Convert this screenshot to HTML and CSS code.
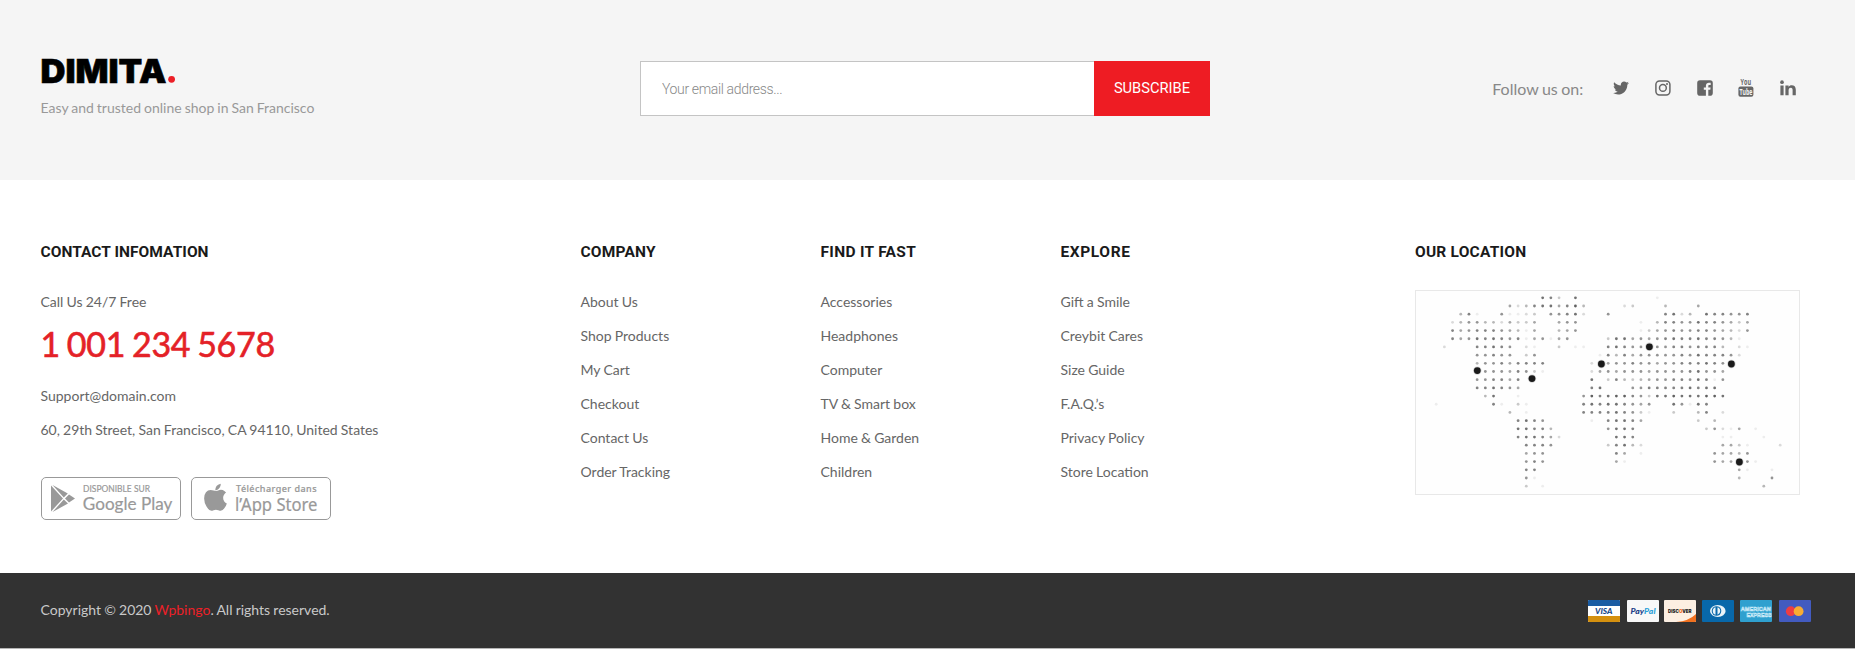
FILE: index.html
```html
<!DOCTYPE html>
<html lang="en">
<head>
<meta charset="utf-8">
<title>Dimita</title>
<link rel="stylesheet" href="styles.css">
</head>
<body>
<section class="newsletter">
  <div class="brand">
    <svg class="logo" width="136" height="42" viewBox="0 -10 136 42"><text class="logo-text" x="-0.5" y="24.5" textLength="126" lengthAdjust="spacingAndGlyphs">DIMITA</text><circle cx="130.6" cy="21.3" r="3.4" fill="#ec1f27"/></svg>
    <p class="tagline">Easy and trusted online shop in San Francisco</p>
  </div>
  <form class="subscribe">
    <input class="email" type="text" placeholder="Your email address...">
    <button class="submit" type="button">SUBSCRIBE</button>
  </form>
  <div class="follow">
    <span class="follow-label">Follow us on:</span>
    <div class="socials">
      <svg width="18" height="20" viewBox="0 -100 1792 1992"><path d="M1684 408q-67 98-162 167 1 14 1 42 0 130-38 259.500t-115.500 248.500-184.500 210.500-258 146-323 54.500q-271 0-496-145 35 4 78 4 225 0 401-138-105-2-188-64.500t-114-159.500q33 5 61 5 43 0 85-11-112-23-185.500-111.500t-73.500-205.500v-4q68 38 146 41-66-44-105-115t-39-154q0-88 44-163 121 149 294.500 238.500t371.500 99.500q-8-38-8-74 0-134 94.500-228.500t228.500-94.500q140 0 236 102 109-21 205-78-37 115-142 178 93-10 186-50z"/></svg>
      <svg width="18" height="20" viewBox="0 0 18 20"><g fill="none" stroke="#666" stroke-width="1.500"><rect x="1.900" y="2.900" width="14" height="14" rx="3.600"/><circle cx="8.900" cy="9.900" r="3.400"/></g><circle cx="13" cy="5.900" r="1"/></svg>
      <svg width="18" height="20" viewBox="0 0 18 20"><path d="M4 2.300h10a2.800 2.800 0 0 1 2.800 2.800v9.800a2.800 2.800 0 0 1-2.800 2.800h-1.700v-6h2l.3-2.300h-2.300V8c0-.7.200-1.100 1.200-1.100h1.200V4.800c-.2 0-1-.1-1.800-.1-1.800 0-3 1.100-3 3.100v1.600H7.800v2.300h2.100v6H4a2.800 2.800 0 0 1-2.800-2.800V5.100A2.800 2.800 0 0 1 4 2.300z"/></svg>
      <svg class="yt-icon" width="18" height="28" viewBox="0 -4 18 28"><text class="yt" x="3.600" y="7.300" textLength="10.400" lengthAdjust="spacingAndGlyphs">You</text><rect x="1.400" y="8.400" width="15" height="10.400" rx="2"/><text class="yt yt-in" x="2.600" y="17" textLength="12.800" lengthAdjust="spacingAndGlyphs">Tube</text></svg>
      <svg width="18" height="20" viewBox="0 0 18 20"><circle cx="3" cy="4.200" r="1.850"/><path d="M1.400 7.500h3.200v9.700H1.400zM6.400 7.500h3.200v1.400c.6-.9 1.500-1.600 3.200-1.600 2.400 0 4 1.500 4 4.400v5.500h-3.200v-5.100c0-1.400-.5-2.300-1.700-2.300-1.300 0-2.300.8-2.300 2.500v4.900H6.400z"/></svg>
    </div>
  </div>
</section>

<section class="main">
  <div class="col contact">
    <h2 class="title t-contact">CONTACT INFOMATION</h2>
    <p class="line">Call Us 24/7 Free</p>
    <p class="phone">1 001 234 5678</p>
    <p class="line">Support@domain.com</p>
    <p class="line">60, 29th Street, San Francisco, CA 94110, United States</p>
    <div class="badges">
      <svg width="140" height="43" viewBox="0 0 140 43">
        <rect class="badge-frame" x=".5" y=".5" width="139" height="42" rx="4.500"/>
        <path class="badge-fill" d="M10 8.500v26L22 21.500zM11.500 8l11.300 12.500 4-4zM28 17.400L24 21.500l4 4 6-4zM22.800 22.500L11.500 35 27 26.600z"/>
        <text class="b-top-g" x="42" y="14.500" textLength="67" lengthAdjust="spacingAndGlyphs">DISPONIBLE SUR</text>
        <text class="b-main-g" x="41.800" y="32.500" textLength="89.500" lengthAdjust="spacingAndGlyphs">Google Play</text>
      </svg>
      <svg width="140" height="43" viewBox="0 0 140 43">
        <rect class="badge-frame" x=".5" y=".5" width="139" height="42" rx="4.500"/>
        <path class="badge-fill" transform="translate(10 6.700) scale(.0163)" d="M1585 1215q-39 125-123 250-129 196-257 196-49 0-140-32-86-32-151-32-61 0-142 33-81 34-132 34-152 0-301-259-147-261-147-503 0-228 113-374 113-144 284-144 72 0 177 30 104 30 138 30 45 0 143-34 102-34 173-34 119 0 213 65 52 36 104 100-79 67-114 118-65 94-65 207 0 124 69 223t158 126zm-376-1173q0 61-29 136-30 75-93 138-54 54-108 72-37 11-104 17 3-149 78-257 74-107 250-148 3 10 5 22z"/>
        <text class="b-top-a" x="45" y="14.800" textLength="80.500">Télécharger dans</text>
        <text class="b-main-a" x="44" y="33.500" textLength="82.500" lengthAdjust="spacingAndGlyphs">l’App Store</text>
      </svg>
    </div>
  </div>
  <div class="col links">
    <h2 class="title t-company">COMPANY</h2>
    <a class="line">About Us</a><a class="line">Shop Products</a><a class="line">My Cart</a><a class="line">Checkout</a><a class="line">Contact Us</a><a class="line">Order Tracking</a>
  </div>
  <div class="col links">
    <h2 class="title t-find">FIND IT FAST</h2>
    <a class="line">Accessories</a><a class="line">Headphones</a><a class="line">Computer</a><a class="line">TV &amp; Smart box</a><a class="line">Home &amp; Garden</a><a class="line">Children</a>
  </div>
  <div class="col links">
    <h2 class="title t-explore">EXPLORE</h2>
    <a class="line">Gift a Smile</a><a class="line">Creybit Cares</a><a class="line">Size Guide</a><a class="line">F.A.Q.’s</a><a class="line">Privacy Policy</a><a class="line">Store Location</a>
  </div>
  <div class="col">
    <h2 class="title t-location">OUR LOCATION</h2>
    <svg class="map" id="map" width="385" height="205" viewBox="-1 -1 385 205"></svg>
  </div>
</section>

<footer class="bottom">
  <p class="copy">Copyright © 2020 <a class="accent">Wpbingo</a>. All rights reserved.</p>
  <div class="cards">
    <svg width="32" height="22" viewBox="0 0 32 22"><rect width="32" height="22" rx="1" fill="#fff"/><path fill="#1a5ca3" d="M1 0h30a1 1 0 0 1 1 1v5H0V1a1 1 0 0 1 1-1z"/><path fill="#d4900f" d="M0 16h32v5a1 1 0 0 1-1 1H1a1 1 0 0 1-1-1z"/><text class="visa" x="7" y="14" textLength="17.500" lengthAdjust="spacingAndGlyphs">VISA</text></svg>
    <svg class="c2" width="32" height="22" viewBox="0 0 32 22"><rect width="32" height="22" rx="1" fill="#f8f8f8"/><text class="paypal" x="3.500" y="13.700" textLength="25" lengthAdjust="spacingAndGlyphs"><tspan fill="#223f87">Pay</tspan><tspan fill="#2ba0d8">Pal</tspan></text></svg>
    <svg class="c3" width="32" height="22" viewBox="0 0 32 22"><rect width="32" height="22" rx="1" fill="#fcefe2"/><path fill="#f1711f" d="M32 14v7a1 1 0 0 1-1 1H12q13-1 20-8z"/><text class="discover" x="4" y="13" textLength="23.500" lengthAdjust="spacingAndGlyphs">DISC<tspan fill="#ee6c1b">O</tspan>VER</text></svg>
    <svg class="c4" width="32" height="22" viewBox="0 0 32 22"><rect width="32" height="22" rx="1" fill="#0868aa"/><ellipse cx="15.800" cy="11" rx="7.800" ry="6" fill="#e9f3f8"/><circle cx="14.500" cy="11" r="4.800" fill="#0868aa"/><path d="M13.500 7.200a4 4 0 0 0 0 7.600zM15.500 7.200a4 4 0 0 1 0 7.600z" fill="#e9f3f8"/></svg>
    <svg class="c5" width="32" height="22" viewBox="0 0 32 22"><rect width="32" height="22" rx="1" fill="#2fa0cf"/><text class="amex" x=".8" y="11" textLength="30" lengthAdjust="spacingAndGlyphs">AMERICAN</text><text class="amex" x="6.500" y="17.300" textLength="25" lengthAdjust="spacingAndGlyphs">EXPRESS</text></svg>
    <svg class="c6" width="32" height="22" viewBox="0 0 32 22"><rect width="32" height="22" rx="1" fill="#435bc0"/><circle cx="11.800" cy="11.200" r="4.900" fill="#ee3d43"/><circle cx="19.600" cy="11.200" r="4.900" fill="#f8ac32"/></svg>
  </div>
</footer>
<script src="map.js"></script>
</body>
</html>
```

FILE: styles.css
```css
* { box-sizing: border-box; }
body { margin: 0; height: 649px; overflow: hidden; background: #fff; font-family: Lato, sans-serif; font-size: 14px; color: #666; }
p, h2 { margin: 0; }

.newsletter { height: 180px; padding: 0 41px 0 40.5px; background: #f5f5f5; display: grid; grid-template-columns: 599.5px 570px 1fr; }
.brand { padding-top: 48px; }
.logo { display: block; }
.logo-text { font: 900 32.5px Inter, sans-serif; fill: #000; stroke: #000; stroke-width: .6px; }
.tagline { margin-top: 8px; line-height: 20px; color: #999; word-spacing: -.6px; }
.subscribe { display: flex; height: 55px; margin-top: 61px; }
.email { width: 454px; height: 55px; border: 1px solid #c4c4c4; border-right: 0; border-radius: 0; padding: 0 20px 0 21px; background: #fff; font: 300 14px Roboto, sans-serif; letter-spacing: -.35px; outline: 0; }
.email::placeholder { color: #888; opacity: 1; }
.submit { width: 116px; height: 55px; border: 0; padding: 0 0 1px; background: #ee1c23; color: #fff; font: 400 14.7px Roboto, sans-serif; }
.follow { display: flex; align-items: flex-start; justify-content: flex-end; padding: 77px 17px 0 0; }
.follow-label { font-size: 16px; line-height: 24px; color: #888; margin-right: 29px; word-spacing: -.6px; }
.socials { display: flex; gap: 23.7px; fill: #666; margin-top: .7px; }
.yt-icon { margin: -4px 0; }
.yt { font: 700 9px "Open Sans", sans-serif; }
.yt-in { fill: #f5f5f5; }

.main { height: 393px; padding: 60px 55px 0 40.5px; display: grid; grid-template-columns: 540px 240px 240px 354.5px 385px; }
.title { height: 50px; font: 700 15.5px/24px Roboto, sans-serif; color: #1a1a1a; white-space: nowrap; }
.t-contact { letter-spacing: .05px; }
.t-company { letter-spacing: .2px; }
.t-find { letter-spacing: .3px; }
.t-explore { letter-spacing: .6px; }
.t-location { letter-spacing: .22px; }
.line { display: block; line-height: 34px; margin-top: -5px; margin-bottom: 5px; }
.contact .line { word-spacing: -.45px; }
.links .line { word-spacing: -.4px; }
.phone { font-size: 34px; line-height: 50px; margin: -5px 0 15px; color: #e42127; letter-spacing: -.3px; word-spacing: -1.500px; -webkit-text-stroke: .6px #e42127; }
.badges { display: flex; gap: 10px; margin-top: 30px; }
.badge-frame { fill: #fff; stroke: #999; stroke-width: 1px; }
.badge-fill { fill: #999; }
.b-top-g, .b-main-g, .b-top-a, .b-main-a { fill: #999; stroke: #999; stroke-width: .2px; }
.b-top-g { font: 400 9px Lato, sans-serif; }
.b-main-g { font: 400 18px Lato, sans-serif; }
.b-top-a { font: 500 9px "Noto Sans", sans-serif; }
.b-main-a { font: 400 18px "Noto Sans", sans-serif; }
.map { display: block; }

.bottom { height: 76px; padding: 0 44px 0 40.5px; background: #323232; border-bottom: 1px solid #b5b5b5; display: flex; justify-content: space-between; }
.copy { color: #c9c9c9; line-height: 20px; margin-top: 27px; word-spacing: -.4px; }
.accent { color: #ec2028; }
.cards { display: flex; margin-top: 27px; }
.c2 { margin-left: 7px; }
.c3, .c4 { margin-left: 5.500px; }
.c5 { margin-left: 6.500px; }
.c6 { margin-left: 7px; }
.visa { font: italic 900 8px Lato, sans-serif; fill: #174a8c; }
.paypal { font: italic 900 8px Lato, sans-serif; }
.discover { font: 900 5px Inter, sans-serif; fill: #222; }
.amex { font: 700 6px "Liberation Sans", sans-serif; fill: none; stroke: #c9eaf7; stroke-width: .6px; }
```

FILE: map.js
```js
// Each row lists runs of dots as "column:digits"; a digit is the dot's darkness.
const rows = [
  "13:873.8 27:1",
  "9:524788 15:5794 23:23 28:4 32:5",
  "3:471 8:61123 14:66782 21:6 28:7824 33:877667",
  "2:24664425335 15:566 25:1 27:477668776535",
  "2:75677765415 15:456 25:13567667765426",
  "2:756878767156156 21:38856567877877641",
  "1:2 5:77876 11:21 15:3 17:11 21:78766.667767774 37:21",
  "5:66766 11:36 20:174756666676877762",
  "5:466757777 19:2 21:566766566777876",
  "5:.66657631 19:2565666566667866 35:5",
  "5:667757 19:8 21:37434566776871 35:6",
  "5:778765 19:78 24:66777778788",
  "6:48 10:1 18:697899763889888998",
  "0:1 7:71 10:31 18:787887656 29:861 32:87",
  "9:4 11:1 18:777787631 29:3 32:47 35:2",
  "10:7876 19:1 21:78875 32:3 34:4",
  "10:88774 21:6887 33:36215 39:1",
  "10:788752 22:887 35:11 40:1",
  "11:7776 21:37842 35:5531 42:2",
  "11:566 22:75 25:1 34:65546",
  "11:676 22:51 34:655.61",
  "11:77 37:51 41:1",
  "11:61 37:4 41:6",
  "11:3 13:1 40:4"
];
const pins = [[61.3, 79.6], [116, 87.6], [185.4, 73], [233.4, 55.8], [315.4, 73], [323.4, 171]];
let out = '<rect x="-.5" y="-.5" width="384" height="204" fill="#fefefe" stroke="#e8e8e8"/>';
rows.forEach((row, r) => row.split(" ").forEach(run => {
  const [start, digits] = run.split(":");
  [...digits].forEach((d, i) => {
    if (d === ".") return;
    const x = 20.2 + 8.19 * (+start + i), y = 6.8 + 8.19 * r;
    out += `<circle cx="${x.toFixed(2)}" cy="${y.toFixed(2)}" r="1.4" fill="#222" opacity="${(d * 0.08).toFixed(2)}"/>`;
  });
}));
pins.forEach(([x, y]) => {
  out += `<circle cx="${x}" cy="${y}" r="4.2" fill="#aaa" opacity=".5"/><circle cx="${x}" cy="${y}" r="3.4" fill="#1a1a1a"/>`;
});
document.getElementById("map").innerHTML = out;
```
